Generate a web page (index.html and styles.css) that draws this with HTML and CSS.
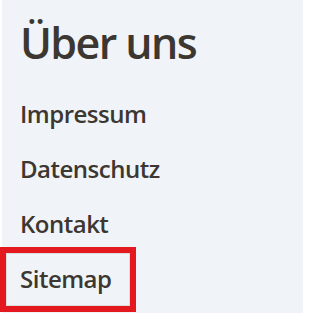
FILE: index.html
```html
<!DOCTYPE html>
<html lang="de">
<head>
<meta charset="utf-8">
<title>Über uns</title>
<link rel="stylesheet" href="styles.css">
</head>
<body>
<nav class="footer-nav">
  <h2 class="footer-title">Über uns</h2>
  <ul class="footer-links">
    <li><a href="#">Impressum</a></li>
    <li><a href="#">Datenschutz</a></li>
    <li><a href="#">Kontakt</a></li>
    <li><a href="#" class="is-focused">Sitemap</a></li>
  </ul>
</nav>
</body>
</html>
```
FILE: styles.css
```css
html, body {
  margin: 0;
  padding: 0;
  background: #ffffff;
}
body {
  width: 303px;
  height: 313px;
  overflow: hidden;
}
.footer-nav {
  box-sizing: border-box;
  height: 313px;
  margin-left: 2px;
  background: #f0f4f8;
  padding: 17px 0 0 18px;
  font-family: "Open Sans", "Noto Sans", sans-serif;
  color: #3d3731;
}
.footer-title {
  margin: 0;
  font-size: 43px;
  line-height: 52px;
  font-weight: 600;
  letter-spacing: -1.6px;
}
.footer-links {
  list-style: none;
  margin: 19px 0 0 0;
  padding: 0;
  display: flex;
  flex-direction: column;
  align-items: flex-start;
  gap: 2px;
}
.footer-links a {
  display: inline-block;
  margin-left: -14px;
  padding: 9px 19px 11px 14px;
  font-size: 24px;
  line-height: 33px;
  font-weight: 600;
  letter-spacing: -0.5px;
  color: #3d3731;
  text-decoration: none;
}
.footer-links a.is-focused {
  outline: 6px solid #e3191f;
  box-shadow: inset 0 0 0 1px #dcdcdc;
}
```
